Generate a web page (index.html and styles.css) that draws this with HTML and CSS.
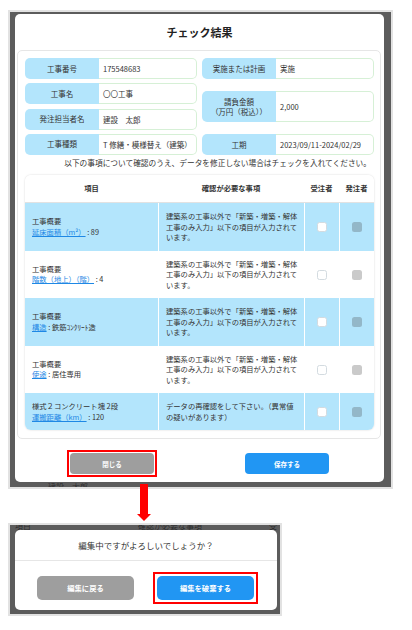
FILE: index.html
```html
<!DOCTYPE html>
<html lang="ja">

<head>
  <meta charset="UTF-8">
  <title>チェック結果</title>
  <link rel="stylesheet" href="styles.css">
</head>

<body>
  <!-- チェック結果モーダル -->
  <div class="frame frame-main">
    <div class="modal">
      <div class="modal-title">チェック結果</div>
      <div class="modal-body">
        <div class="info">
          <div class="info-col">
            <div class="info-item">
              <div class="info-label">工事番号</div>
              <div class="info-value">175548683</div>
            </div>
            <div class="info-item">
              <div class="info-label">工事名</div>
              <div class="info-value">〇〇工事</div>
            </div>
            <div class="info-item">
              <div class="info-label">発注担当者名</div>
              <div class="info-value">建設　太郎</div>
            </div>
            <div class="info-item">
              <div class="info-label">工事種類</div>
              <div class="info-value">T 修繕・模様替え（建築）</div>
            </div>
          </div>
          <div class="info-col">
            <div class="info-item">
              <div class="info-label">実施または計画</div>
              <div class="info-value">実施</div>
            </div>
            <div class="info-item tall">
              <div class="info-label">請負金額<br>（万円（税込））</div>
              <div class="info-value">2,000</div>
            </div>
            <div class="info-item">
              <div class="info-label">工期</div>
              <div class="info-value">2023/09/11-2024/02/29</div>
            </div>
          </div>
        </div>

        <p class="note">以下の事項について確認のうえ、データを修正しない場合はチェックを入れてください。</p>

        <div class="table-wrap">
          <table class="check-table">
            <colgroup>
              <col class="c-item">
              <col class="c-desc">
              <col class="c-box">
              <col class="c-box">
            </colgroup>
            <thead>
              <tr>
                <th>項目</th>
                <th>確認が必要な事項</th>
                <th>受注者</th>
                <th>発注者</th>
              </tr>
            </thead>
            <tbody>
              <tr class="blue">
                <td>工事概要<br><a href="#">延床面積（m²）</a> : 89</td>
                <td class="desc">建築系の工事以外で「新築・増築・解体<br>工事のみ入力」以下の項目が入力されて<br>います。</td>
                <td class="box"><span class="cb"></span></td>
                <td class="box"><span class="cb cb-off"></span></td>
              </tr>
              <tr>
                <td>工事概要<br><a href="#">階数（地上）（階）</a> : 4</td>
                <td class="desc">建築系の工事以外で「新築・増築・解体<br>工事のみ入力」以下の項目が入力されて<br>います。</td>
                <td class="box"><span class="cb"></span></td>
                <td class="box"><span class="cb cb-off"></span></td>
              </tr>
              <tr class="blue">
                <td>工事概要<br><a href="#">構造</a> : 鉄筋ｺﾝｸﾘｰﾄ造</td>
                <td class="desc">建築系の工事以外で「新築・増築・解体<br>工事のみ入力」以下の項目が入力されて<br>います。</td>
                <td class="box"><span class="cb"></span></td>
                <td class="box"><span class="cb cb-off"></span></td>
              </tr>
              <tr>
                <td>工事概要<br><a href="#">使途</a> : 居住専用</td>
                <td class="desc">建築系の工事以外で「新築・増築・解体<br>工事のみ入力」以下の項目が入力されて<br>います。</td>
                <td class="box"><span class="cb"></span></td>
                <td class="box"><span class="cb cb-off"></span></td>
              </tr>
              <tr class="blue">
                <td>様式２コンクリート塊 2段<br><a href="#">運搬距離（km）</a> : 120</td>
                <td class="desc">データの再確認をして下さい。（異常値<br>の疑いがあります）</td>
                <td class="box"><span class="cb"></span></td>
                <td class="box"><span class="cb cb-off"></span></td>
              </tr>
            </tbody>
          </table>
        </div>
      </div>
      <div class="modal-footer">
        <div class="mark">
          <button class="btn btn-gray">閉じる</button>
        </div>
        <button class="btn btn-blue">保存する</button>
      </div>
    </div>
    <div class="behind behind-bottom">建設　太郎</div>
  </div>

  <!-- 矢印 -->
  <div class="arrow">
    <svg width="14" height="37" viewBox="0 0 14 37">
      <rect x="3" y="0" width="8" height="30" fill="#f00"/>
      <polygon points="0,30 14,30 7,37" fill="#f00"/>
    </svg>
  </div>

  <!-- 確認ダイアログ -->
  <div class="frame frame-confirm">
    <div class="behind behind-top">
      <span class="bt1">項目</span>
      <span class="bt2">確認が必要な事項</span>
      <span>受</span>
    </div>
    <div class="modal">
      <div class="confirm-title">編集中ですがよろしいでしょうか？</div>
      <div class="confirm-footer">
        <button class="btn btn-lg btn-gray">編集に戻る</button>
        <div class="mark mark-wide">
          <button class="btn btn-lg btn-blue">編集を破棄する</button>
        </div>
      </div>
    </div>
  </div>
</body>

</html>
```

FILE: styles.css
```css
/* 全体 */
* {
  box-sizing: border-box;
}

body {
  margin: 0;
  background: #fff;
  font-family: "Noto Sans CJK JP", "Noto Sans", sans-serif;
  color: #333;
}

/* 画面キャプチャの枠（暗い背景） */
.frame {
  border: 2px solid #e2e2e2;
  background: #5c5c5c;
}

.frame-main {
  width: 385px;
  margin: 10px 0 0 8px;
  padding: 2px 7px 0 5px;
}

.frame-confirm {
  width: 274px;
  margin: 2px 0 0 8px;
  padding: 0 3px 4px 5px;
}

.behind {
  height: 5px;
  overflow: hidden;
  font-size: 8px;
  color: rgba(0, 0, 0, 0.55);
  white-space: nowrap;
}

.behind-bottom {
  line-height: 10px;
  padding-left: 33px;
}

.behind-top {
  line-height: 1px;
  display: flex;
}

.bt1 {
  width: 125px;
}

.bt2 {
  width: 133px;
}

/* モーダル */
.modal {
  background: #fff;
  border-radius: 5px;
}

.modal-title {
  height: 36px;
  display: flex;
  align-items: center;
  justify-content: center;
  font-size: 11px;
  font-weight: bold;
  color: #222;
}

.modal-body {
  margin: 0 3px 0 2px;
  border: 1px solid #e6e6e6;
  border-radius: 5px;
  padding: 7px 6px 8px 7px;
}

/* 工事情報 */
.info {
  display: grid;
  grid-template-columns: 1fr 1fr;
  column-gap: 5px;
  height: 97px;
}

.info-col {
  display: flex;
  flex-direction: column;
  justify-content: space-between;
}

.info-item {
  display: flex;
  height: 21px;
  font-size: 7.5px;
}

.info-item.tall {
  height: 31px;
}

.info-label {
  width: 74px;
  background: #b3e5fc;
  border-radius: 5px 0 0 5px;
  display: flex;
  align-items: center;
  justify-content: center;
  text-align: center;
  line-height: 10px;
}

.info-value {
  flex: 1;
  border: 1px solid #d6f0d6;
  border-left: none;
  border-radius: 0 5px 5px 0;
  display: flex;
  align-items: center;
  padding-left: 4px;
}

.note {
  margin: 2px 0 6px;
  font-size: 7.7px;
  line-height: 12px;
  text-align: right;
  padding-right: 3px;
  white-space: nowrap;
}

/* チェック表 */
.table-wrap {
  border-radius: 6px;
  overflow: hidden;
  box-shadow: 0 0 2px rgba(0, 0, 0, 0.18);
}

.check-table {
  width: 100%;
  border-collapse: separate;
  border-spacing: 0;
  table-layout: fixed;
  font-size: 7.3px;
  line-height: 10.5px;
}

.c-item {
  width: 133px;
}

.c-desc {
  width: 146px;
}

.c-box {
  width: 35px;
}

.check-table th {
  height: 28px;
  background: #fff;
  font-weight: bold;
  border-bottom: 1px solid #e2e2e2;
}

.check-table td {
  padding: 8px 7px;
  vertical-align: middle;
  white-space: nowrap;
}

.check-table td + td {
  border-left: 1px solid #fff;
}

.check-table tr.blue td {
  background: #b3e5fc;
}

.check-table a {
  color: #1e88e5;
  text-decoration: underline;
}

.check-table td.box {
  padding: 0;
  text-align: center;
}

.cb {
  display: inline-block;
  width: 10px;
  height: 10px;
  border-radius: 2.5px;
  background: #fff;
  border: 1px solid #d3dbe0;
  vertical-align: middle;
}

.cb-off {
  background: rgba(66, 66, 66, 0.28);
  border: none;
}

/* ボタン */
.modal-footer {
  display: flex;
  align-items: center;
  justify-content: space-between;
  padding: 11px 55px 5px 52px;
}

.btn {
  display: block;
  width: 84px;
  height: 21px;
  border: none;
  border-radius: 4px;
  color: #fff;
  font-family: inherit;
  font-weight: bold;
  font-size: 6.5px;
  padding: 0;
}

.btn-gray {
  background: #9e9e9e;
}

.btn-blue {
  background: #2196f3;
}

.btn-lg {
  width: 97px;
  height: 24px;
  font-size: 7.3px;
  border-radius: 5px;
}

/* 赤枠（注記） */
.mark {
  display: flex;
  border: 2px solid #f00;
  padding: 1px;
}

.mark-wide {
  padding: 2px;
}

.arrow {
  margin: -5px 0 0 137px;
  height: 37px;
}

.arrow svg {
  display: block;
}

/* 確認ダイアログ */
.confirm-title {
  height: 31px;
  display: flex;
  align-items: center;
  justify-content: center;
  font-size: 8.5px;
  border-bottom: 1px solid #e6e6e6;
}

.confirm-footer {
  display: flex;
  align-items: center;
  gap: 19px;
  padding: 11px 0 6px 22px;
}
```
